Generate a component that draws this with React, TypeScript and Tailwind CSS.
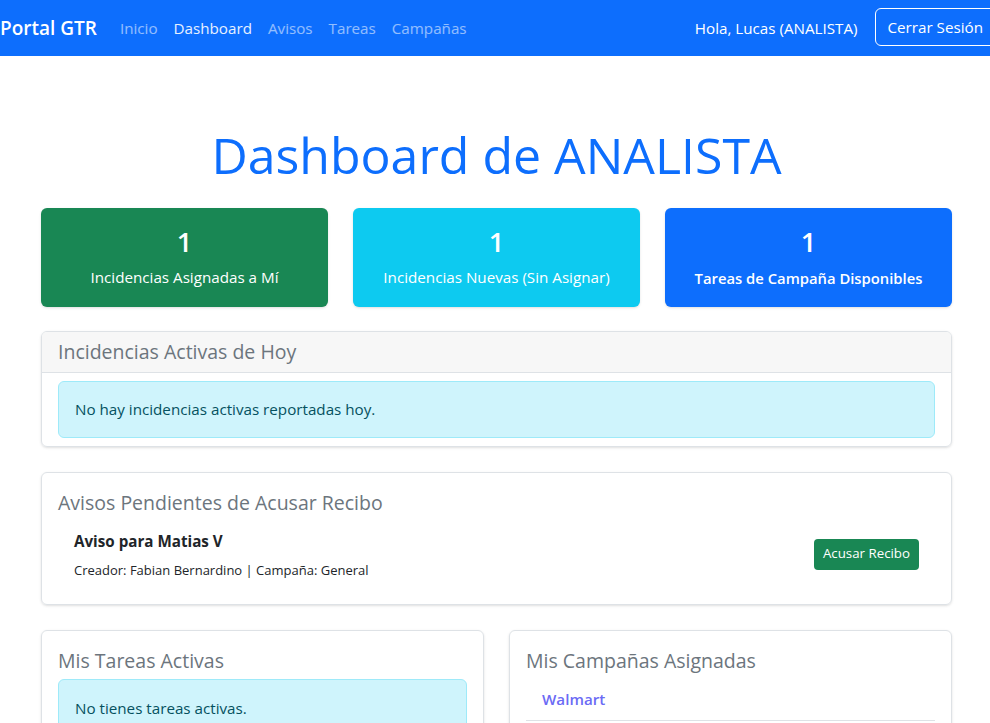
import React from "react";

const font = { fontFamily: '"Open Sans", "Noto Sans", sans-serif' };

export default function App() {
  return (
    <div className="min-h-[723px] bg-white text-[#212529] text-[15.2px]" style={font}>
      <nav className="h-[56px] bg-[#0d6efd] flex items-center justify-between">
        <div className="flex items-center">
          <span className="text-[19px] font-semibold text-white mr-[15px]">Portal GTR</span>
          <div className="flex items-center text-[15.2px]">
            <span className="px-[8px] text-white/55">Inicio</span>
            <span className="px-[8px] text-white/90">Dashboard</span>
            <span className="px-[8px] text-white/55">Avisos</span>
            <span className="px-[8px] text-white/55">Tareas</span>
            <span className="px-[8px] text-white/55">Campañas</span>
          </div>
        </div>
        <div className="flex items-center">
          <span className="text-white text-[15.2px] mr-[17px]">Hola, Lucas (ANALISTA)</span>
          <span className="border border-white rounded-[6px] text-white text-[15.2px] px-[12px] h-[38px] flex items-center -mr-[6px] -mt-[2px]">Cerrar Sesión</span>
        </div>
      </nav>

      <div className="pl-[41px] pr-[38px]">
        <h1 className="text-center text-[#0d6efd] text-[50px] leading-[1.2] font-normal mt-[69px] mb-[23px]">Dashboard de ANALISTA</h1>

        <div className="grid grid-cols-3 gap-[25px]">
          <div className="bg-[#198754] rounded-[6px] shadow-sm h-[99px] flex flex-col items-center justify-center text-white">
            <div className="text-[27px] font-semibold leading-[1.2]">1</div>
            <div className="mt-[8px]">Incidencias Asignadas a Mí</div>
          </div>
          <div className="bg-[#0dcaf0] rounded-[6px] shadow-sm h-[99px] flex flex-col items-center justify-center text-white">
            <div className="text-[27px] font-semibold leading-[1.2]">1</div>
            <div className="mt-[8px]">Incidencias Nuevas (Sin Asignar)</div>
          </div>
          <div className="bg-[#0d6efd] rounded-[6px] shadow-sm h-[99px] flex flex-col items-center justify-center text-white">
            <div className="text-[27px] font-semibold leading-[1.2]">1</div>
            <div className="mt-[8px] font-semibold text-[14.8px]">Tareas de Campaña Disponibles</div>
          </div>
        </div>

        <div className="mt-[24px] border border-[#dee2e6] rounded-[6px] shadow-sm overflow-hidden">
          <div className="h-[41px] bg-[#f7f7f7] border-b border-[#dee2e6] px-[16px] flex items-center">
            <span className="text-[19.5px] text-[#6c757d] font-medium">Incidencias Activas de Hoy</span>
          </div>
          <div className="px-[16px] pt-[8px] pb-[8px]">
            <div className="bg-[#cff4fc] border border-[#9eeaf9] rounded-[6px] text-[#055160] px-[16px] h-[57px] flex items-center">
              No hay incidencias activas reportadas hoy.
            </div>
          </div>
        </div>

        <div className="mt-[25px] border border-[#dee2e6] rounded-[6px] shadow-sm p-[16px] h-[133px]">
          <div className="text-[19.5px] text-[#6c757d] font-medium leading-[1.2] mt-[2px]">Avisos Pendientes de Acusar Recibo</div>
          <div className="flex items-center justify-between px-[16px] mt-[15px]">
            <div>
              <div className="font-bold leading-[24px]">Aviso para Matias V</div>
              <div className="text-[13px] mt-[8px]">Creador: Fabian Bernardino | Campaña: General</div>
            </div>
            <span className="bg-[#198754] text-white text-[13.3px] rounded-[4px] px-[9px] h-[31px] flex items-center -mt-[2px]">Acusar Recibo</span>
          </div>
        </div>

        <div className="mt-[25px] grid grid-cols-2 gap-[25px]">
          <div className="border border-[#dee2e6] rounded-[6px] shadow-sm p-[16px] h-[120px]">
            <div className="text-[19.5px] text-[#6c757d] font-medium leading-[1.2] mt-[2px]">Mis Tareas Activas</div>
            <div className="mt-[7px] bg-[#cff4fc] border border-[#9eeaf9] rounded-[6px] text-[#055160] px-[16px] pt-[17px] h-[60px]">
              No tienes tareas activas.
            </div>
          </div>
          <div className="border border-[#dee2e6] rounded-[6px] shadow-sm p-[16px] h-[120px]">
            <div className="text-[19.5px] text-[#6c757d] font-medium leading-[1.2] mt-[2px]">Mis Campañas Asignadas</div>
            <div className="mt-[8px] px-[16px] pt-[8px] pb-[9px] border-b border-[#dee2e6] font-semibold text-[#6b6bf5]">Walmart</div>
          </div>
        </div>
      </div>
    </div>
  );
}
